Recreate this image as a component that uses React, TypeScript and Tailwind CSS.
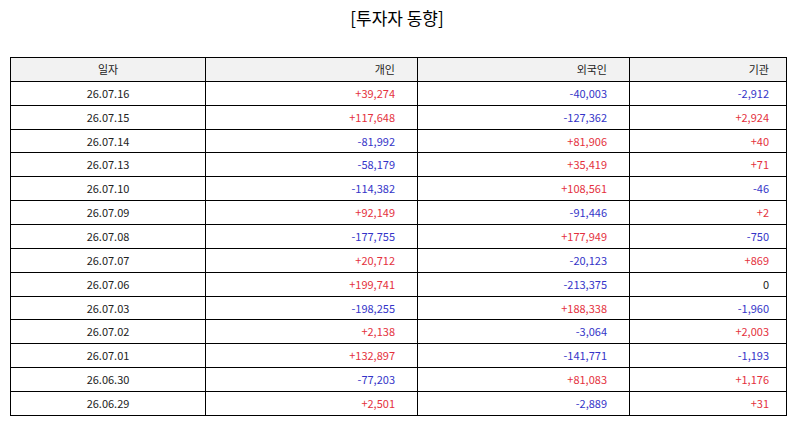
import React from "react";

type Row = { date: string; ind: string; frn: string; inst: string };

const rows: Row[] = [
   { date: "26.07.16", ind: "+39,274", frn: "-40,003", inst: "-2,912" },
   { date: "26.07.15", ind: "+117,648", frn: "-127,362", inst: "+2,924" },
   { date: "26.07.14", ind: "-81,992", frn: "+81,906", inst: "+40" },
   { date: "26.07.13", ind: "-58,179", frn: "+35,419", inst: "+71" },
   { date: "26.07.10", ind: "-114,382", frn: "+108,561", inst: "-46" },
   { date: "26.07.09", ind: "+92,149", frn: "-91,446", inst: "+2" },
   { date: "26.07.08", ind: "-177,755", frn: "+177,949", inst: "-750" },
   { date: "26.07.07", ind: "+20,712", frn: "-20,123", inst: "+869" },
   { date: "26.07.06", ind: "+199,741", frn: "-213,375", inst: "0" },
   { date: "26.07.03", ind: "-198,255", frn: "+188,338", inst: "-1,960" },
   { date: "26.07.02", ind: "+2,138", frn: "-3,064", inst: "+2,003" },
   { date: "26.07.01", ind: "+132,897", frn: "-141,771", inst: "-1,193" },
   { date: "26.06.30", ind: "-77,203", frn: "+81,083", inst: "+1,176" },
   { date: "26.06.29", ind: "+2,501", frn: "-2,889", inst: "+31" },
];

// 부호에 따라 색상 결정
const tone = (v: string) =>
   v.startsWith("+")
      ? "text-[#e4313d]"
      : v.startsWith("-")
      ? "text-[#3434c8]"
      : "text-[#222]";

const cell = "border border-black h-[23.87px] p-0 leading-none";

const App = () => {
   return (
      <div
         className="w-[794px] h-[425px] bg-white text-[#222]"
         style={{ fontFamily: '"Noto Sans CJK KR", "Noto Sans", sans-serif' }}
      >
         <h1 className="pt-[5px] text-center text-[17px] leading-[25px] text-black">
            [투자자 동향]
         </h1>
         <table className="mt-[27px] ml-[10px] w-[776px] border-collapse table-fixed text-[11px]">
            <colgroup>
               <col className="w-[195px]" />
               <col className="w-[212px]" />
               <col className="w-[212px]" />
               <col className="w-[157px]" />
            </colgroup>
            <thead>
               <tr className="bg-[#f2f2f2]">
                  <th className={`${cell} font-normal text-center`}>일자</th>
                  <th className={`${cell} font-normal text-right pr-[22px]`}>개인</th>
                  <th className={`${cell} font-normal text-right pr-[22px]`}>외국인</th>
                  <th className={`${cell} font-normal text-right pr-[17px]`}>기관</th>
               </tr>
            </thead>
            <tbody>
               {rows.map((r) => (
                  <tr key={r.date}>
                     <td className={`${cell} text-center`}>{r.date}</td>
                     <td className={`${cell} text-right pr-[22px] ${tone(r.ind)}`}>{r.ind}</td>
                     <td className={`${cell} text-right pr-[22px] ${tone(r.frn)}`}>{r.frn}</td>
                     <td className={`${cell} text-right pr-[17px] ${tone(r.inst)}`}>{r.inst}</td>
                  </tr>
               ))}
            </tbody>
         </table>
      </div>
   );
};

export default App;
